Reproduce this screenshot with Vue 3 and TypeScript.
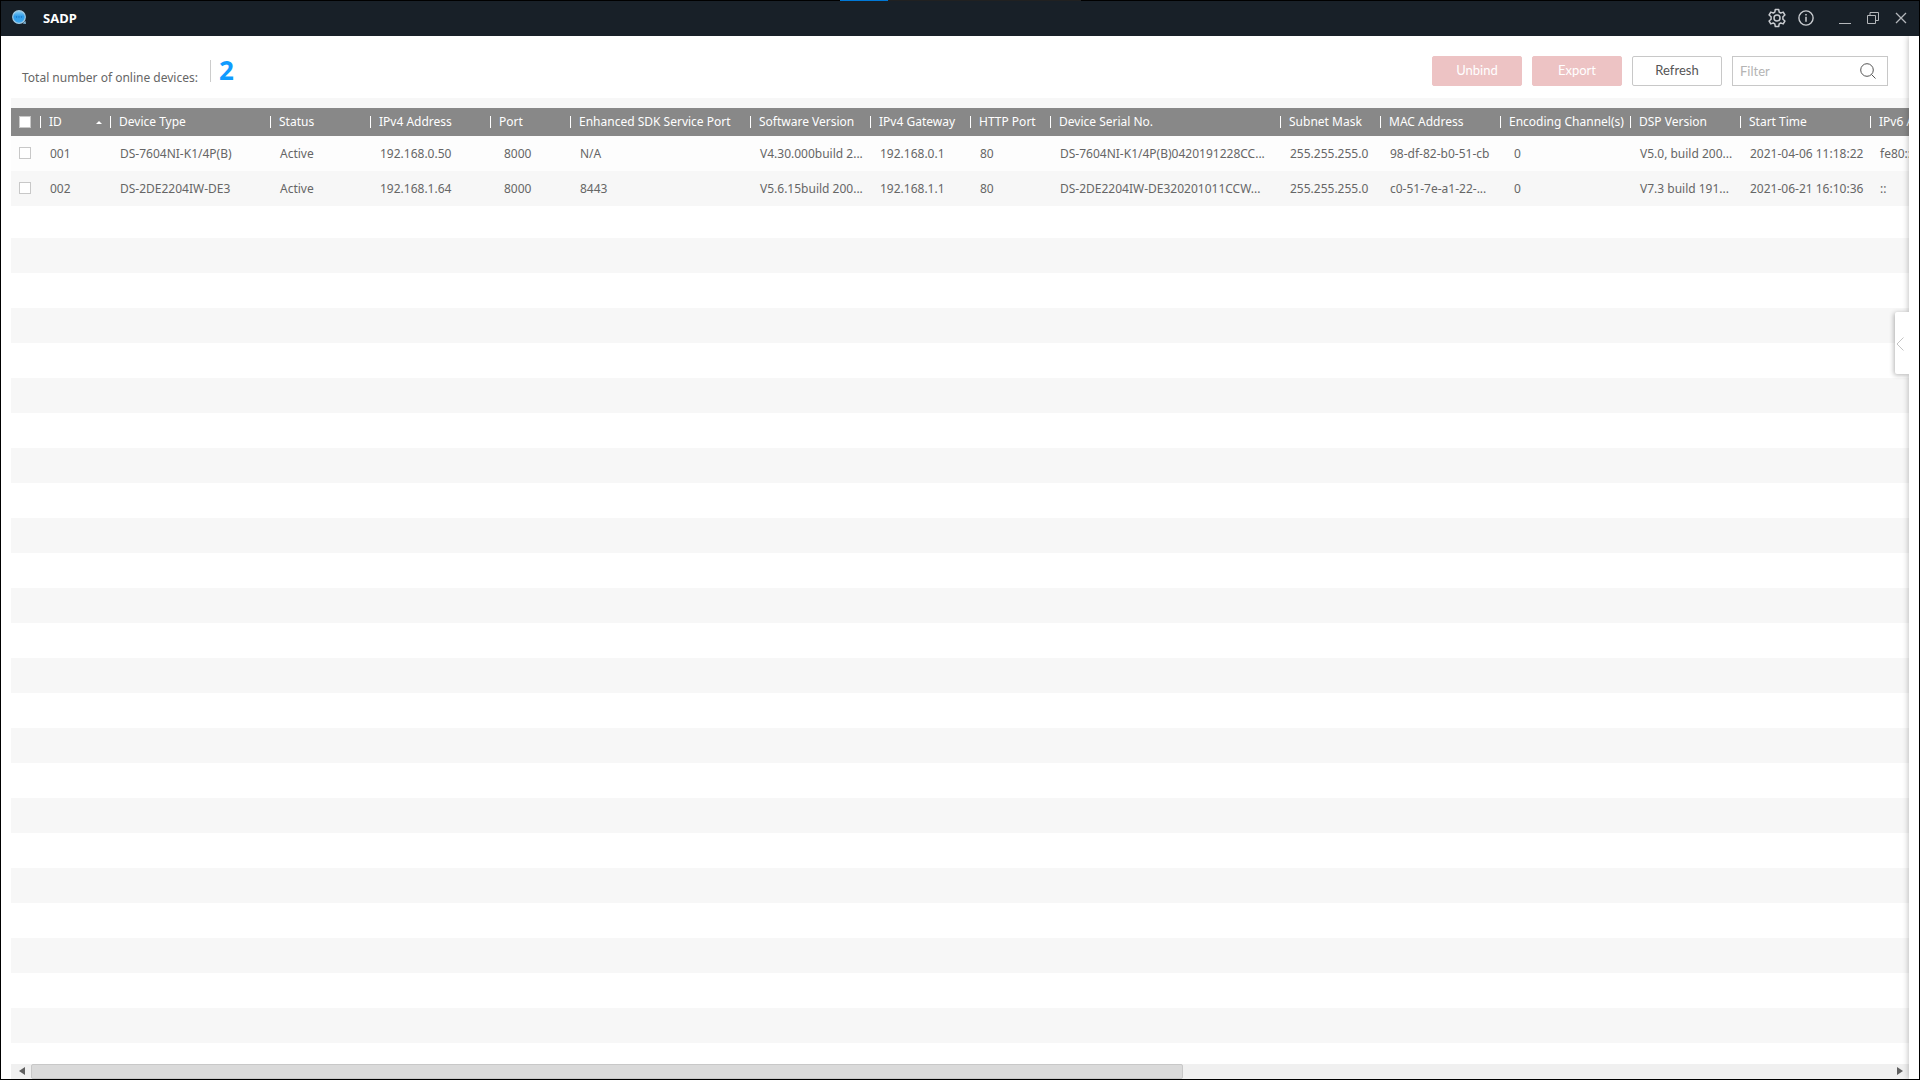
<script setup lang="ts">
import { ref } from 'vue'

interface Column {
  key: string
  title: string
  width: number
  inset?: boolean
}

type Device = Record<string, string>

const columns: Column[] = [
  { key: 'id', title: 'ID', width: 70 },
  { key: 'type', title: 'Device Type', width: 160 },
  { key: 'status', title: 'Status', width: 100 },
  { key: 'ip', title: 'IPv4 Address', width: 120 },
  { key: 'port', title: 'Port', width: 80, inset: true },
  { key: 'sdk', title: 'Enhanced SDK Service Port', width: 180 },
  { key: 'software', title: 'Software Version', width: 120 },
  { key: 'gateway', title: 'IPv4 Gateway', width: 100 },
  { key: 'http', title: 'HTTP Port', width: 80 },
  { key: 'serial', title: 'Device Serial No.', width: 230 },
  { key: 'mask', title: 'Subnet Mask', width: 100 },
  { key: 'mac', title: 'MAC Address', width: 120 },
  { key: 'channels', title: 'Encoding Channel(s)', width: 130, inset: true },
  { key: 'dsp', title: 'DSP Version', width: 110 },
  { key: 'start', title: 'Start Time', width: 130 },
  { key: 'ipv6', title: 'IPv6 Address', width: 200 },
]

const devices: Device[] = [
  {
    id: '001', type: 'DS-7604NI-K1/4P(B)', status: 'Active', ip: '192.168.0.50', port: '8000', sdk: 'N/A',
    software: 'V4.30.000build 2...', gateway: '192.168.0.1', http: '80',
    serial: 'DS-7604NI-K1/4P(B)0420191228CC...', mask: '255.255.255.0', mac: '98-df-82-b0-51-cb',
    channels: '0', dsp: 'V5.0, build 200...', start: '2021-04-06 11:18:22', ipv6: 'fe80::',
  },
  {
    id: '002', type: 'DS-2DE2204IW-DE3', status: 'Active', ip: '192.168.1.64', port: '8000', sdk: '8443',
    software: 'V5.6.15build 200...', gateway: '192.168.1.1', http: '80',
    serial: 'DS-2DE2204IW-DE320201011CCW...', mask: '255.255.255.0', mac: 'c0-51-7e-a1-22-...',
    channels: '0', dsp: 'V7.3 build 191...', start: '2021-06-21 16:10:36', ipv6: '::',
  },
]

const selected = ref<string[]>([])
const filter = ref('')

function toggleAll(event: Event) {
  selected.value = (event.target as HTMLInputElement).checked ? devices.map((d) => d.id) : []
}
</script>

<template>
  <div class="window">
    <div class="top-edge"><span class="edge-accent"></span><span class="edge-dim"></span></div>
    <header class="titlebar">
      <svg class="logo" width="16" height="16" viewBox="0 0 16 16" aria-hidden="true">
        <defs>
          <linearGradient id="globe" x1="0" y1="0" x2="0" y2="1">
            <stop offset="0" stop-color="#8fd0f4" />
            <stop offset="0.45" stop-color="#2d9be8" />
            <stop offset="1" stop-color="#3fa9ef" />
          </linearGradient>
        </defs>
        <circle cx="7" cy="7" r="6.3" fill="url(#globe)" stroke="#a3cbe3" stroke-width="1.2" />
        <path d="M10.5 13.6 14 14l-.6-3.2z" fill="#7fb4d6" />
        <path d="M4 7h1M6.5 7h1M9 7h1" stroke="#1565b5" stroke-width="1.2" />
      </svg>
      <h1 class="title">SADP</h1>
      <div class="window-tools">
        <button type="button" class="icon-button" aria-label="Settings">
          <svg width="20" height="20" viewBox="0 0 20 20" fill="none" stroke="#c9ccd0" stroke-width="1.5" stroke-linejoin="round">
            <path d="M8.3 1.5h3.4l.5 2.6 1.5.9 2.5-.9 1.7 2.900-2 1.800v2.400l2 1.800-1.700 2.900-2.500-.9-1.500.9-.5 2.600H8.300l-.5-2.600-1.500-.9-2.500.9L2.100 13l2-1.800V8.800L2.100 7l1.700-2.900 2.500.9 1.500-.9z" />
            <circle cx="10" cy="10" r="3" />
          </svg>
        </button>
        <button type="button" class="icon-button info" aria-label="About">
          <svg width="16" height="16" viewBox="0 0 16 16" fill="none" stroke="#c9ccd0" stroke-width="1.4">
            <circle cx="8" cy="8" r="7.1" />
            <path d="M8 6.8v5M8 4v1.5" stroke-width="1.5" />
          </svg>
        </button>
        <button type="button" class="icon-button minimize" aria-label="Minimize">
          <svg width="12" height="12" viewBox="0 0 12 12" stroke="#b4b7bb"><path d="M0 11.5h12" /></svg>
        </button>
        <button type="button" class="icon-button restore" aria-label="Restore">
          <svg width="12" height="12" viewBox="0 0 12 12" fill="none" stroke="#b4b7bb">
            <path d="M.5 3.5h8v8h-8zM3 3V.5h8.500v8H9" />
          </svg>
        </button>
        <button type="button" class="icon-button close" aria-label="Close">
          <svg width="12" height="12" viewBox="0 0 12 12" stroke="#b4b7bb" stroke-width="1.3"><path d="m1 1 10 10M11 1 1 11" /></svg>
        </button>
      </div>
    </header>

    <div class="body">
      <main class="content">
        <div class="toolbar">
          <div class="summary">
            <span class="summary-label">Total number of online devices:</span>
            <strong class="summary-count">{{ devices.length }}</strong>
          </div>
          <div class="actions">
            <button type="button" class="button muted" disabled>Unbind</button>
            <button type="button" class="button muted" disabled>Export</button>
            <button type="button" class="button">Refresh</button>
            <label class="search">
              <input v-model="filter" type="text" placeholder="Filter" aria-label="Filter" />
              <svg width="16" height="16" viewBox="0 0 16 16" fill="none" stroke="#555" aria-hidden="true">
                <circle cx="7" cy="7" r="6.3" />
                <path d="m11.5 11.5 4 4" />
              </svg>
            </label>
          </div>
        </div>

        <div class="grid">
          <table class="devices">
            <colgroup>
              <col class="check-col" />
              <col v-for="c in columns" :key="c.key" :style="{ width: c.width + 'px' }" />
            </colgroup>
            <thead>
              <tr>
                <th class="check"><input type="checkbox" aria-label="Select all devices" @change="toggleAll" /></th>
                <th v-for="c in columns" :key="c.key" scope="col">
                  <span class="heading">{{ c.title }}<i v-if="c.key === 'id'" class="sort"></i></span>
                </th>
              </tr>
            </thead>
            <tbody>
              <tr v-for="d in devices" :key="d.id">
                <td class="check">
                  <input v-model="selected" type="checkbox" :value="d.id" :aria-label="'Select device ' + d.id" />
                </td>
                <td v-for="c in columns" :key="c.key" :class="{ inset: c.inset }">{{ d[c.key] }}</td>
              </tr>
            </tbody>
          </table>
          <div class="stripes"></div>
        </div>

        <div class="scrollbar">
          <button type="button" class="scroll-arrow" aria-label="Scroll left">
            <svg width="6" height="8" viewBox="0 0 6 8" fill="#606060"><path d="M6 0v8L0 4z" /></svg>
          </button>
          <div class="track"><div class="thumb"></div></div>
          <button type="button" class="scroll-arrow" aria-label="Scroll right">
            <svg width="6" height="8" viewBox="0 0 6 8" fill="#606060"><path d="M0 0v8l6-4z" /></svg>
          </button>
        </div>
      </main>

      <aside class="drawer">
        <button type="button" class="drawer-handle" aria-label="Open details">
          <svg width="8" height="14" viewBox="0 0 8 14" fill="none" stroke="#c4c4c4"><path d="M7.5.5 1 7l6.500 6.500" /></svg>
        </button>
      </aside>
    </div>
  </div>
</template>

<style>
body {
  margin: 0;
}
</style>

<style scoped>
* {
  box-sizing: border-box;
}

.window {
  display: flex;
  flex-direction: column;
  min-height: 100vh;
  border: 1px solid #000;
  border-top: 0;
  background: #fff;
  color: #666;
  font: 12px/16px "Noto Sans", "Open Sans", sans-serif;
}

button,
input {
  margin: 0;
  padding: 0;
  font: inherit;
}

.top-edge {
  display: flex;
  height: 1px;
  padding-left: 839px;
  background: #000;
}

.edge-accent {
  width: 48px;
  background: #0078d7;
}

.edge-dim {
  width: 193px;
  background: #212121;
}

.titlebar {
  display: flex;
  align-items: center;
  height: 35px;
  padding: 0 12px 2px 11px;
  background: #182028;
}

.logo {
  margin-right: 15px;
}

.title {
  margin: 0;
  color: #fff;
  font-size: 13px;
  font-weight: 700;
}

.window-tools {
  display: flex;
  align-items: center;
  margin-left: auto;
}

.icon-button {
  display: flex;
  border: 0;
  background: none;
}

.info {
  margin-left: 11px;
}

.minimize {
  margin-left: 25px;
}

.restore,
.close {
  margin-left: 16px;
}

.body {
  display: flex;
  flex: 1;
}

.content {
  display: flex;
  flex: 1;
  flex-direction: column;
  min-width: 0;
  padding-left: 10px;
}

.toolbar {
  display: flex;
  align-items: flex-start;
  justify-content: space-between;
  height: 62px;
  padding: 20px 21px 0 11px;
}

.summary {
  display: flex;
  align-items: flex-end;
  height: 30px;
}

.summary-label {
  margin-right: 12px;
}

.summary-count {
  height: 22px;
  margin-bottom: 4px;
  padding-left: 8px;
  border-left: 1px solid #ccc;
  color: #109bff;
  font-size: 26px;
  line-height: 20px;
}

.actions {
  display: flex;
  gap: 10px;
}

.button {
  width: 90px;
  height: 30px;
  padding-bottom: 2px;
  border: 1px solid #c8c8c8;
  border-radius: 2px;
  background: #fff;
  color: #555;
  font-family: Lato, sans-serif;
  font-size: 13px;
}

.muted {
  border-color: #edc3c4;
  background: #edc3c4;
  color: #fff;
}

.search {
  display: flex;
  align-items: center;
  width: 156px;
  height: 30px;
  padding: 0 11px 0 7px;
  border: 1px solid #c8c8c8;
}

.search input {
  flex: 1;
  min-width: 0;
  border: 0;
  outline: 0;
  background: none;
  color: #555;
  font-family: Lato, sans-serif;
  font-size: 13px;
}

.search input::placeholder {
  color: #b4b4b4;
  opacity: 1;
}

.grid {
  display: flex;
  flex: 1;
  flex-direction: column;
  overflow: hidden;
  border-top: 10px solid #f7f7f7;
}

.devices {
  width: 2060px;
  border-collapse: collapse;
  table-layout: fixed;
}

.check-col {
  width: 30px;
}

th {
  height: 28px;
  padding: 0 0 0 8px;
  background: linear-gradient(#fff, #fff) right center / 1px 12px no-repeat #888;
  color: #fff;
  font-weight: 400;
  text-align: left;
  white-space: nowrap;
}

.heading {
  display: flex;
  align-items: center;
  justify-content: space-between;
}

.sort {
  margin-right: 9px;
  border: 3px solid transparent;
  border-top: 0;
  border-bottom-color: #fff;
}

td {
  height: 35px;
  padding: 0 0 0 9px;
  overflow: hidden;
  white-space: nowrap;
}

td.inset {
  padding-left: 13px;
}

.check {
  padding: 0 0 0 8px;
}

td.check {
  padding-bottom: 2px;
}

tbody tr {
  background: #fdfdfd;
}

tbody tr:nth-child(even) {
  background: #f7f7f7;
}

input[type="checkbox"] {
  display: block;
  width: 12px;
  height: 12px;
  border: 1px solid #c8c8c8;
  background: #fff;
  appearance: none;
}

input[type="checkbox"]:checked {
  background: #109bff;
}

.stripes {
  flex: 1;
  background: linear-gradient(#f7f7f7 35px, #fff 35px) 0 32px / 100% 70px;
}

.scrollbar {
  display: flex;
  height: 15px;
  background: #f0f0f0;
}

.scroll-arrow {
  display: flex;
  align-items: center;
  justify-content: center;
  width: 20px;
  padding: 0 0 1px 1px;
  border: 0;
  background: none;
}

.track {
  flex: 1;
}

.thumb {
  width: 62%;
  height: 15px;
  border: 1px solid #c8c8c8;
  border-radius: 2px;
  background: #dadada;
}

.drawer {
  position: relative;
  width: 10px;
  background: #fff;
  box-shadow: 0 0 6px rgba(0, 0, 0, 0.3);
  clip-path: inset(0 0 0 -20px);
}

.drawer-handle {
  position: absolute;
  top: 276px;
  right: 10px;
  display: flex;
  align-items: center;
  width: 14px;
  height: 62px;
  padding: 2px 0 0 1px;
  border: 0;
  border-radius: 2px 0 0 2px;
  background: #fff;
  box-shadow: -1px 1px 5px rgba(0, 0, 0, 0.3);
  clip-path: inset(-10px 0 -10px -10px);
}
</style>
